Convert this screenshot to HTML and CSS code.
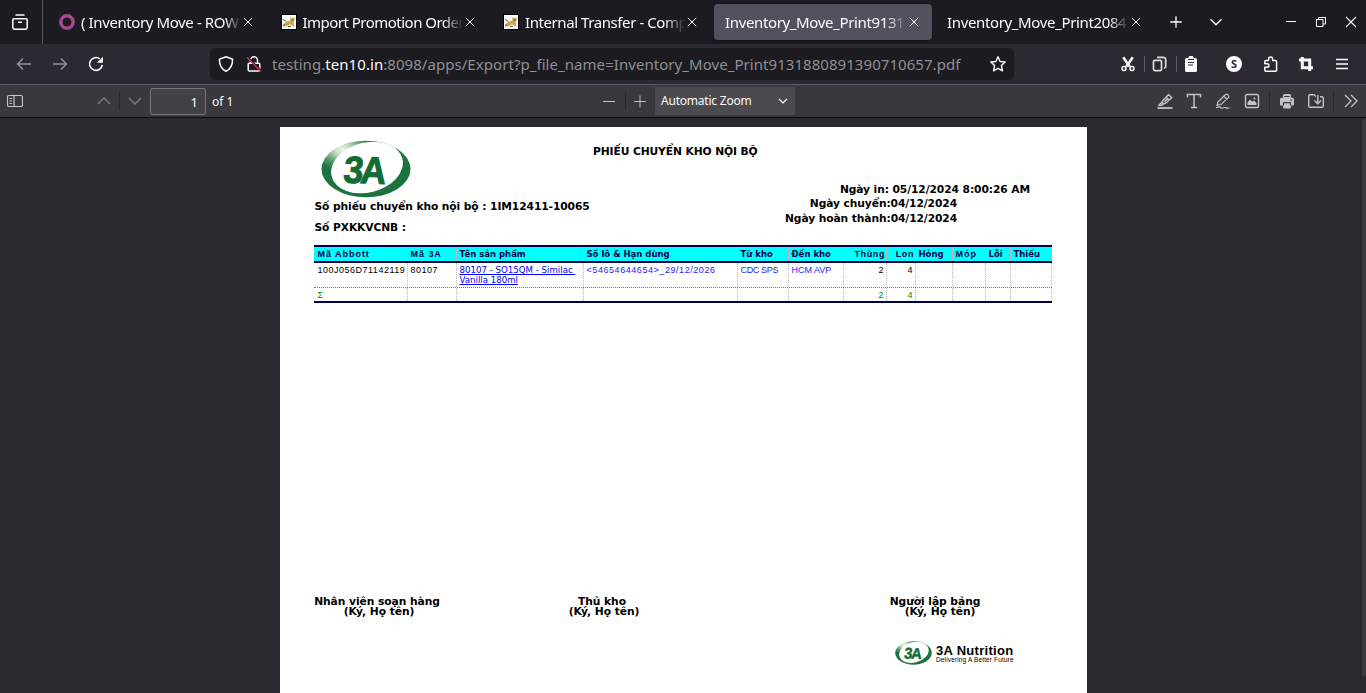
FILE: index.html
```html
<!DOCTYPE html>
<html lang="vi">
<head>
<meta charset="utf-8">
<title>Inventory_Move_Print9131880891390710657.pdf</title>
<link rel="stylesheet" href="styles.css">
</head>
<body>
<svg width="0" height="0" class="defs">
  <defs>
    <symbol id="x" viewBox="0 0 16 16"><path d="M3.800 3.800l8.400 8.400M12.200 3.800l-8.400 8.400"/></symbol>
    <symbol id="cat" viewBox="0 0 16 16"><rect width="16" height="16" fill="#000" stroke="none"/><rect x="1" y="1" width="14" height="14" fill="#fff" stroke="none"/><path d="M2 10.500l3-2.500 3-1 1.500-1-.5-3 1.500 1h1.500l1.500-1 .3 3-1 2 .2 3.500 1 1-2.500-.5-2-1.500-2 .5-2 1.500H3z" fill="#d2a650" stroke="none"/><path d="M2 5.500l2 1 1.500 1M2 12l2-1.500M7 12.500h3M10.500 6h2" stroke="#5b5040" stroke-width="1"/></symbol>
    <radialGradient id="lg" cx=".24" cy=".16" r=".36">
      <stop offset="0" stop-color="#eff6ea"/><stop offset=".25" stop-color="#c6dfc4"/><stop offset=".65" stop-color="#559a68"/><stop offset="1" stop-color="#1d7340"/>
    </radialGradient>
    <symbol id="logo" viewBox="0 0 90 58">
      <ellipse cx="45" cy="29" rx="44.500" ry="28.300" fill="url(#lg)" stroke="none"/>
      <ellipse cx="46" cy="27.500" rx="36.500" ry="25" fill="#fff" stroke="none" transform="rotate(-14 46 27.500)"/>
      <text class="logo-text" transform="translate(21.500 42.500) rotate(2) skewX(-4) scale(.94 1)">3A</text>
    </symbol>
  </defs>
</svg>

<header class="tabs">
  <div class="view-button"><svg class="i16" viewBox="0 0 16 16"><path d="M3.500 1h9M2 4.700h12a1.200 1.200 0 0 1 1.200 1.200v7.400a2 2 0 0 1-2 2H2.800a2 2 0 0 1-2-2V5.900A1.200 1.200 0 0 1 2 4.700zM6 8.300h4" stroke-width="1.500"/></svg></div>
  <div class="tab"><svg class="favicon" viewBox="0 0 16 16"><circle cx="8" cy="8" r="6.200" stroke="#a8498f" stroke-width="3.400"/></svg><span class="label first">( Inventory Move - ROW</span><svg class="close"><use href="#x"/></svg></div>
  <div class="tab"><svg class="favicon"><use href="#cat"/></svg><span class="label second">Import Promotion Order</span><svg class="close"><use href="#x"/></svg></div>
  <div class="tab"><svg class="favicon"><use href="#cat"/></svg><span class="label third">Internal Transfer - Comp</span><svg class="close"><use href="#x"/></svg></div>
  <div class="tab active"><span class="label file">Inventory_Move_Print9131</span><svg class="close"><use href="#x"/></svg></div>
  <div class="tab"><span class="label file">Inventory_Move_Print2084</span><svg class="close"><use href="#x"/></svg></div>
  <svg class="i16 new-tab" viewBox="0 0 16 16"><path d="M8 2.200v11.600M2.200 8h11.600" stroke-width="1.300"/></svg>
  <svg class="i16 all-tabs" viewBox="0 0 16 16"><path d="M2.500 5.300L8 10.700l5.500-5.400" stroke-width="1.400"/></svg>
  <div class="window-buttons">
    <svg class="i16" viewBox="0 0 16 16"><path d="M3 7.500h10" shape-rendering="crispEdges"/></svg>
    <svg class="i16" viewBox="0 0 16 16"><path d="M3.500 5.500h6.500v7H3.500zM5.500 5.500V3.500h7v6.500H10"/></svg>
    <svg class="i16" viewBox="0 0 16 16"><path d="M3 3l10 10M13 3L3 13" stroke-width="1.100"/></svg>
  </div>
</header>

<nav class="nav">
  <svg class="i16 back dim" viewBox="0 0 16 16"><path d="M15 8H1.500M7 2.500L1.500 8 7 13.500" stroke-width="1.400"/></svg>
  <svg class="i16 forward dim" viewBox="0 0 16 16"><path d="M1 8h13.500M9 2.500L14.500 8 9 13.500" stroke-width="1.400"/></svg>
  <svg class="i16 reload" viewBox="0 0 16 16"><path d="M14.300 9A6.400 6.400 0 1 1 12 3" stroke-width="1.600"/><path d="M15 .8v6H9z" fill="#fbfbfe" stroke="none"/></svg>
  <div class="urlbar">
    <svg class="i16" viewBox="0 0 16 16"><path d="M8 .8l6.600 2.400c0 6-1.600 9.800-6.600 12-5-2.200-6.600-6-6.600-12z" stroke-width="1.500" stroke-linejoin="round"/></svg>
    <svg class="i16 lock" viewBox="0 0 16 16"><path d="M4.500 7V4.200a3.500 3.500 0 0 1 7 0V7M3.200 7.300h9.600a1 1 0 0 1 1 1v5.500a1.300 1.300 0 0 1-1.300 1.300h-9a1.300 1.300 0 0 1-1.300-1.300V8.300a1 1 0 0 1 1-1z" stroke-width="1.500"/><path d="M1.500 .8l14 14" stroke="#1c1b22" stroke-width="1.500"/><path d="M1 1.500l14 14" stroke="#e22850" stroke-width="1.500"/></svg>
    <span class="url">testing.<b>ten10.in</b>:8098/apps/Export?p_file_name=Inventory_Move_Print9131880891390710657.pdf</span>
    <svg class="i16 star" viewBox="0 0 16 16"><path d="M8 .8l2.100 4.700 5.100.5-3.800 3.500 1.100 5.300L8 12.300l-4.500 2.500 1.100-5.300L.8 6l5.100-.5z" stroke-width="1.400" stroke-linejoin="round"/></svg>
  </div>
  <div class="extensions">
    <svg class="i16" viewBox="0 0 16 16"><path d="M3.200 1.300l6.500 9.200M12.800 1.300L6.300 10.500" stroke-width="2.600"/><circle cx="4" cy="12.600" r="2" stroke-width="1.500"/><circle cx="12" cy="12.600" r="2" stroke-width="1.500"/></svg>
    <i class="bar"></i>
    <svg class="i16" viewBox="0 0 16 16"><path d="M2.800 4.300h5.400A1.300 1.300 0 0 1 9.500 5.600v7.700a1.300 1.300 0 0 1-1.300 1.300H2.800a1.300 1.300 0 0 1-1.300-1.300V5.600a1.300 1.300 0 0 1 1.300-1.300zM5 1.400h6.500A2.200 2.200 0 0 1 13.700 3.600V11l-1.500 1.500" stroke-width="1.700" stroke="#dcdce0"/></svg>
    <i class="bar"></i>
    <svg class="i16 clipboard" viewBox="0 0 16 16"><path d="M3.500 2h2a2.500 2.500 0 0 1 5 0h2A1.500 1.500 0 0 1 14 3.500v11a1.500 1.500 0 0 1-1.500 1.500h-9A1.500 1.500 0 0 1 2 14.500v-11A1.500 1.500 0 0 1 3.500 2z" fill="#fbfbfe" stroke="none"/><path d="M5 3.500h6M5 6.500h6M5 9h5" stroke="#2b2a33" stroke-width="1.200"/></svg>
    <span class="account">S</span>
    <svg class="i16 puzzle" viewBox="0 0 16 16"><path d="M1.800 11.200h2.400a1.700 1.700 0 0 0 0-3.500H1.800V5.700a1.200 1.200 0 0 1 1.200-1.200h2.600V3a2 2 0 0 1 4 0v1.500h2.700a1.300 1.300 0 0 1 1.300 1.300V14a1.200 1.200 0 0 1-1.200 1.200H3A1.200 1.200 0 0 1 1.800 14z" stroke-width="1.500" stroke-linejoin="round"/></svg>
    <svg class="i16 crop" viewBox="0 0 16 16"><path d="M1 4h10.700v11M4.300 1v10.700H15" stroke-width="3"/></svg>
    <svg class="i16 menu" viewBox="0 0 16 16"><path d="M2 3.500h12M2 8h12M2 12.500h12" stroke-width="1.300"/></svg>
  </div>
</nav>

<div class="pdfbar">
  <svg class="i16 sidebar" viewBox="0 0 16 16"><path d="M2 2.500h12a1.500 1.500 0 0 1 1.500 1.500v8a1.500 1.500 0 0 1-1.500 1.500H2A1.500 1.500 0 0 1 .5 12V4A1.500 1.500 0 0 1 2 2.500zM7 2.500v11M2.500 5.500H5M2.500 8H5M2.500 10.500H5" stroke-width="1.200"/></svg>
  <svg class="i16 prev dim" viewBox="0 0 16 16"><path d="M2 11l6-6 6 6" stroke-width="1.300"/></svg>
  <i class="split"></i>
  <svg class="i16 next dim" viewBox="0 0 16 16"><path d="M2 5l6 6 6-6" stroke-width="1.300"/></svg>
  <span class="page-input">1</span><span class="page-total">of 1</span>
  <svg class="i16 minus" viewBox="0 0 16 16"><path d="M2 8.500h12"/></svg>
  <i class="split"></i>
  <svg class="i16 plus" viewBox="0 0 16 16"><path d="M2 8.500h12M8 2.500v12"/></svg>
  <span class="zoom"><span>Automatic Zoom</span><svg class="i16" viewBox="0 0 16 16"><path d="M4 6l4 4 4-4" stroke="#fbfbfe" stroke-width="1.200"/></svg></span>
  <div class="tools">
    <svg class="i16" viewBox="0 0 16 16"><path d="M.5 15h15" stroke-width="1.800"/><path d="M6 7.500l5.500-6 3.200 3.200-6 5.500-2.200.8-1.500-1.500zM9 4l3 3M5 9l-3 3.200h3l1.500-1.500M7.500 8.800l3-3" stroke-width="1.400"/></svg>
    <svg class="i16" viewBox="0 0 16 16"><path d="M1.500 4.500v-3h13v3M8 1.500v13M5 14.500h6" stroke-width="1.500"/></svg>
    <svg class="i16" viewBox="0 0 16 16"><path d="M3 9L10.500 1.500c1.500-1 4 1 3 3L6 11.500l-4 .8zM9 3.500l3 3M1 14.800l3-1.200c1 0 1.500 1.500 3 1.500s2-1 3.500-.5 1.500.8 4 .4" stroke-width="1.200"/></svg>
    <svg class="i16" viewBox="0 0 16 16"><rect x="1.500" y="1.500" width="13" height="13" rx="1.500" stroke-width="1.400"/><path d="M3.500 12V9.500l2.500-3 2 2 2-1 2.500 2.500v2z" fill="#c4c4c6" stroke="none"/><circle cx="10.500" cy="5.500" r="1" fill="#c4c4c6" stroke="none"/></svg>
    <i class="split"></i>
    <svg class="i16 print" viewBox="0 0 16 16"><path d="M4 4.800V2.500a1.500 1.500 0 0 1 1.500-1.500h5A1.500 1.500 0 0 1 12 2.500v2.300h1.500A1.500 1.500 0 0 1 15 6.300v5.200a1 1 0 0 1-1 1h-2V14a1.500 1.500 0 0 1-1.500 1.500h-5A1.500 1.500 0 0 1 4 14v-1.500H2a1 1 0 0 1-1-1V6.300a1.500 1.500 0 0 1 1.500-1.500z" fill="#c4c4c6" stroke="none"/><path d="M5.300 3.500h5.400M4.500 9.700h7M4.500 9.500v3M11.500 9.500v3M11.500 7.200h1.500" stroke="#38383d" stroke-width="1.200"/></svg>
    <svg class="i16" viewBox="0 0 16 16"><path d="M8 3.500L6 1.700H2A1.400 1.400 0 0 0 .7 3v10A1.400 1.400 0 0 0 2 14.300h12a1.400 1.400 0 0 0 1.300-1.300V5A1.400 1.400 0 0 0 14 3.700h-2M9.800 2v8M6.500 7.500l3.300 3.300 3.200-3.300" stroke-width="1.400"/></svg>
    <i class="split"></i>
    <svg class="i16" viewBox="0 0 16 16"><path d="M2 2l6 6-6 6M8 2l6 6-6 6" stroke-width="1.300"/></svg>
  </div>
</div>

<main class="viewer">
  <article class="page">
    <header class="doc-head">
      <div class="doc-left"><svg class="logo"><use href="#logo"/></svg><p class="number">Số phiếu chuyển kho nội bộ : 1IM12411-10065</p><p>Số PXKKVCNB :</p></div>
      <h1>PHIẾU CHUYỂN KHO NỘI BỘ</h1>
      <div class="dates"><p class="printed">Ngày in: 05/12/2024 8:00:26 AM</p><p>Ngày chuyển:04/12/2024</p><p>Ngày hoàn thành:04/12/2024</p></div>
    </header>
    <section class="grid">
      <div class="row head"><span class="h">Mã Abbott</span><span class="h">Mã 3A</span><span>Tên sản phẩm</span><span>Số lô &amp; Hạn dùng</span><span>Từ kho</span><span>Đến kho</span><span class="h num">Thùng</span><span class="h num">Lon</span><span>Hỏng</span><span class="h">Móp</span><span>Lỗi</span><span>Thiếu</span></div>
      <div class="row data"><span>100J056D71142119</span><span>80107</span><span class="product"><a>80107 - SO15QM - Similac&nbsp;<br>Vanilla 180ml</a></span><span class="blue lot">&lt;54654644654&gt;_29/12/2026</span><span class="blue tighter">CDC SPS</span><span class="blue tight">HCM AVP</span><span class="num">2</span><span class="num">4</span><span></span><span></span><span></span><span></span></div>
      <div class="row sum"><span>Σ</span><span></span><span></span><span></span><span></span><span></span><span class="num">2</span><span class="num">4</span><span></span><span></span><span></span><span></span></div>
    </section>
    <section class="signatures">
      <div><p>Nhân viên soạn hàng</p><p class="sub">(Ký, Họ tên)</p></div>
      <div><p>Thủ kho</p><p class="sub">(Ký, Họ tên)</p></div>
      <div><p>Người lập bảng</p><p class="sub">(Ký, Họ tên)</p></div>
    </section>
    <footer class="brand"><svg class="logo-small"><use href="#logo"/></svg><div><strong>3A Nutrition</strong><small>Delivering A Better Future</small></div></footer>
  </article>
  <div class="scrollbar"></div>
</main>
</body>
</html>
```

FILE: styles.css
```css
* { box-sizing: border-box; }
body { margin: 0; height: 693px; overflow: hidden; display: flex; flex-direction: column; background: #2a2a2e; color: #fbfbfe; font-family: "Noto Sans", "Open Sans", sans-serif; }
p, h1 { margin: 0; }
svg { display: block; flex: none; fill: none; stroke: #fbfbfe; }
.defs { position: absolute; }
.i16, .favicon, .close { width: 16px; height: 16px; }
.dim { opacity: .5; }

.tabs { height: 44px; background: #1c1b22; display: flex; align-items: center; flex: none; }
.view-button { width: 43px; height: 44px; padding: 14px 0 0 12px; border-right: 1px solid #5b5b66; margin-right: 3px; }
.tab { width: 218px; height: 36px; margin: 0 2px; padding-left: 11px; display: flex; align-items: center; border-radius: 4px; flex: none; }
.tab.active { background: #52525e; box-shadow: 0 0 3px #0006; }
.favicon { margin-right: 6px; }
.label { flex: 1; overflow: hidden; white-space: nowrap; font-size: 15px; line-height: 22px; mask-image: linear-gradient(to left, transparent, #000 20px); }
.first { letter-spacing: -.4px; mask-image: linear-gradient(to left, transparent, #000 16px); }
.second { letter-spacing: -.52px; margin-left: -.5px; }
.third { letter-spacing: -.42px; }
.file { letter-spacing: -.36px; }
.close { margin: 0 10px 0 -1px; }
.new-tab { margin-left: 12px; }
.all-tabs { margin-left: 24px; }
.window-buttons { margin-left: 59px; display: flex; gap: 14px; }

.nav { height: 40px; background: #2b2a33; display: flex; align-items: center; flex: none; }
.back { margin-left: 16px; }
.forward { margin-left: 20px; }
.reload { margin-left: 20px; }
.urlbar { width: 804px; height: 32px; margin-left: 106px; padding: 0 8px; border-radius: 4px; background: #1c1b22; display: flex; align-items: center; }
.lock { margin-left: 12px; }
.url { margin-left: 10px; flex: 1; white-space: nowrap; font-size: 15px; line-height: 22px; color: #8f8f95; letter-spacing: .055px; }
.url b { font-weight: 400; color: #fbfbfe; }
.extensions { display: flex; align-items: center; margin-left: 106px; }
.bar { width: 1px; height: 16px; background: #5b5b66; margin: 0 7px 0 8px; }
.clipboard { margin-left: -1px; }
.account { width: 16px; height: 16px; border-radius: 50%; background: #fff; color: #2b2a33; font: bold 11px/16px "Noto Sans", sans-serif; text-align: center; margin: 0 21px 0 27px; }
.crop { margin-left: 19px; }
.menu { margin-left: 20px; }

.pdfbar { height: 34px; background: #38383d; border-top: 1px solid #5b5b66; border-bottom: 1px solid #0c0c0d; display: flex; align-items: center; flex: none; font-size: 12px; }
.pdfbar svg { stroke: #c4c4c6; }
.split { width: 1px; height: 18px; background: #28282b; }
.sidebar { margin-left: 7px; }
.prev { margin: 0 7px 0 73px; }
.next { margin-left: 7px; }
.page-input { width: 56px; height: 27px; margin-left: 7px; border: 1px solid #76767a; border-radius: 2px; background: #414146; text-align: right; padding-right: 7px; line-height: 26px; font-size: 13px; }
.page-total { margin-left: 6px; width: 388px; }
.minus { margin: 0 8px 0 1px; }
.plus { margin: 0 7px 0 6px; }
.zoom { width: 140px; height: 28px; background: #4a4a4f; display: flex; align-items: center; justify-content: space-between; padding: 0 4px 0 6px; letter-spacing: -.22px; }
.zoom span { margin-top: -1px; }
.tools { margin-left: 362px; display: flex; align-items: center; gap: 13px; }
.tools .split { margin: 0 -4px; height: 22px; }

.viewer { flex: 1; min-height: 0; padding-left: 280px; background: #2a2a2e; display: flex; justify-content: space-between; }
.scrollbar { width: 4px; height: 559px; background: #38383d; border-radius: 2px; }
.page { width: 807px; height: 567px; margin-top: 9px; background: #fff; color: #000; padding: 0 35px 0 34px; font-family: "DejaVu Sans", sans-serif; }
.doc-head { height: 118px; display: flex; font-weight: 700; font-size: 10.700px; line-height: 14.400px; white-space: nowrap; letter-spacing: -.09px; }
.doc-left { width: 279px; padding-top: 13px; padding-left: .5px; }
.logo { width: 90px; height: 58px; margin: 0 0 1.600px 6.500px; }
.logo-text { font: bold 38px "Liberation Sans", sans-serif; fill: #146a35; stroke: #146a35; stroke-width: 1px; letter-spacing: -3px; }
.number { margin-bottom: 6.600px; }
h1 { width: 192px; padding-top: 17.600px; font-size: 10.700px; line-height: 14.400px; }
.dates { width: 172px; padding-top: 56px; text-align: right; }
.printed { margin-right: -73px; }

.grid { width: 738px; border-top: 2px solid #00004c; border-bottom: 2px solid #00004c; font: 9px/10px "Liberation Sans", sans-serif; }
.row { display: grid; grid-template-columns: 94px 49px 127px 154px 51px 55px 43px 29px 37px 33px 25px 41px; }
.row > span { border-right: 1px dotted #bbb; padding: 3px 2px 0 2.500px; white-space: nowrap; letter-spacing: .5px; }
.row > span:first-child { padding-left: 3.500px; }
.row > .num { text-align: right; }
.head { height: 16px; background: #0ff; border-bottom: 2px solid #00004c; color: #00004c; font: bold 8.500px/10px "DejaVu Sans", sans-serif; }
.row.head > span { letter-spacing: 0; padding-top: 2px; }
.row.head > .h { font: bold 9px/10px "Liberation Sans", sans-serif; letter-spacing: .96px; }
.row.head > .num { letter-spacing: .6px; padding-right: 1px; }
.data { height: 25px; border-bottom: 1px dotted #35a035; }
.row.data > span { padding-top: 2px; }
.product { font: 8.650px/10px "DejaVu Sans", sans-serif; }
.row > .product { letter-spacing: 0; }
.product a { color: #00f; text-decoration: underline; }
.blue { color: #22f; }
.row > .lot { letter-spacing: .56px; }
.row > .tight { letter-spacing: 0; }
.row > .tighter { letter-spacing: -.35px; }
.sum { height: 13px; color: #080; }
.row.sum > span { padding-top: 2px; }

.signatures { display: flex; margin-top: 294px; height: 44px; font-weight: 700; font-size: 10.700px; line-height: 10px; white-space: nowrap; letter-spacing: -.05px; }
.signatures > div { width: 126px; text-align: center; }
.signatures > div:nth-child(2) { margin-left: 98px; width: 128px; }
.signatures > div:nth-child(3) { margin-left: 206px; }
.sub { padding-left: 4px; }
.signatures > div:nth-child(3) .sub { padding-left: 10px; }

.brand { display: flex; align-items: center; margin-left: 581px; font-family: "Liberation Sans", sans-serif; }
.logo-small { width: 37px; height: 24px; margin-right: 4px; }
.brand strong { display: block; font-size: 13px; line-height: 13px; letter-spacing: .3px; }
.brand small { display: block; font-size: 6.500px; line-height: 6px; white-space: nowrap; letter-spacing: .14px; }
```
